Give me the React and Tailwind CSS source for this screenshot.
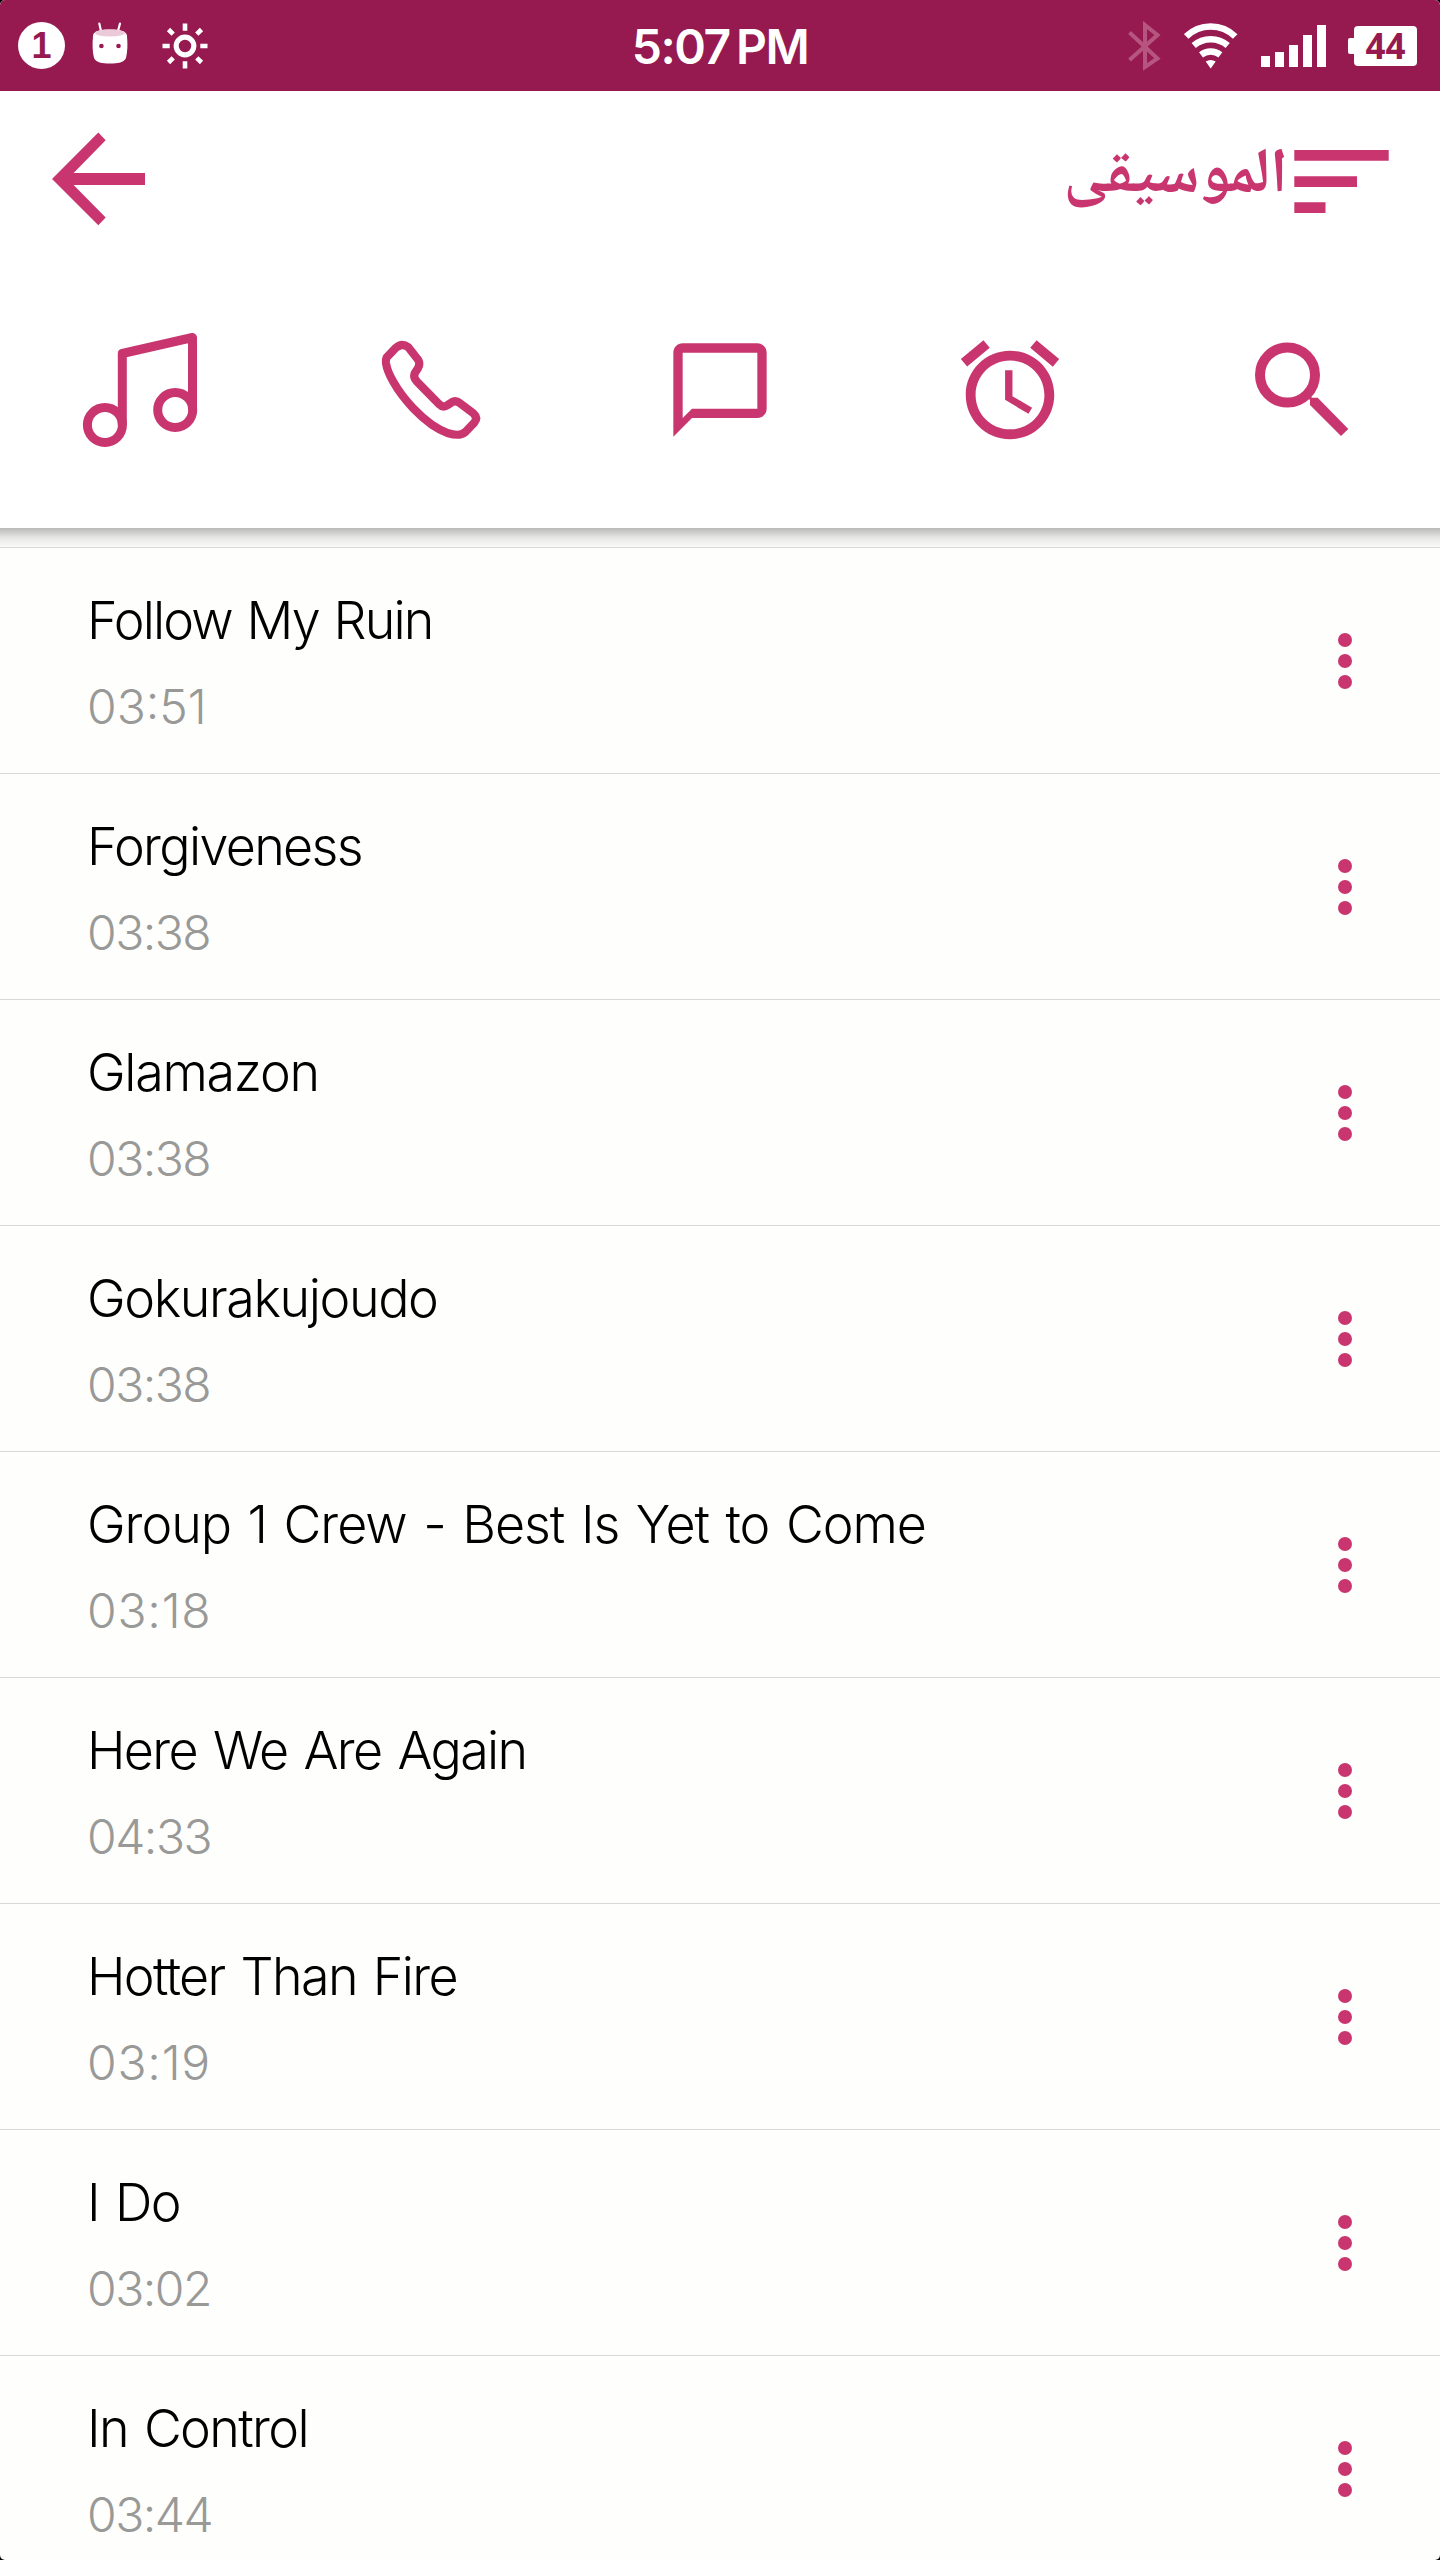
const tracks = [
  { title: 'Follow My Ruin', time: '03:51', spacing: 'tracking-[-1.850px] [word-spacing:2px]', timeSpacing: 'tracking-[0px]' },
  { title: 'Forgiveness', time: '03:38' },
  { title: 'Glamazon', time: '03:38', spacing: 'tracking-[-1.300px]' },
  { title: 'Gokurakujoudo', time: '03:38', spacing: 'tracking-[-1.400px]' },
  { title: 'Group 1 Crew - Best Is Yet to Come', time: '03:18', spacing: 'tracking-[-1.050px] [word-spacing:3px]', timeSpacing: 'tracking-[0.800px]' },
  { title: 'Here We Are Again', time: '04:33' },
  { title: 'Hotter Than Fire', time: '03:19', timeSpacing: 'tracking-[0.800px]' },
  { title: 'I Do', time: '03:02' },
  { title: 'In Control', time: '03:44' },
]

const signalBars = ['h-[11px]', 'h-[15px]', 'h-[22px]', 'h-[32px]', 'h-[42px]']

function AndroidIcon() {
  return (
    <svg className="w-[36px] h-[44px]" viewBox="0 0 36 44" fill="none">
      <path d="M9 9 7.3 1.5M26 9 28 1.5" stroke="#fff" strokeWidth="2.2" strokeLinecap="round" />
      <path d="M1 14C1 9 8 7.500 18 7.500S35 9 35 14C35.800 22 35.500 30 34 36 32 40.500 26 41.500 18 41.500S4 40.500 2 36C.5 30 .2 22 1 14Z" fill="#fff" />
      <ellipse cx="18" cy="11" rx="15" ry="3.400" fill="#ecc9d9" />
      <circle cx="9.400" cy="24" r="2.300" fill="#961950" />
      <circle cx="26.500" cy="24" r="2.300" fill="#961950" />
    </svg>
  )
}

function SunIcon() {
  return (
    <svg className="w-[46px] h-[46px]" viewBox="-23 -23 46 46" fill="none" stroke="#fff">
      <circle r="8.800" strokeWidth="5.200" />
      <path
        d="M0-22.500V-15.300M0 15.300V22.500M-22.500 0H-15.300M15.300 0H22.500M-16.500-16.500-11.800-11.800M16.500-16.500 11.800-11.800M-16.500 16.500-11.800 11.800M16.500 16.500 11.800 11.800"
        strokeWidth="4.600"
      />
    </svg>
  )
}

function StatusBar() {
  return (
    <header className="h-[91px] shrink-0 rounded-t-[5px] bg-[#961950] text-white grid grid-cols-3 items-center">
      <div className="flex items-center pl-[18px]">
        <span className="size-[47px] rounded-full bg-white text-[#961950] flex items-center justify-center font-['Liberation_Sans',sans-serif] font-bold text-[36px] leading-none">
          1
        </span>
        <div className="ml-[27px] mb-[4px]"><AndroidIcon /></div>
        <div className="ml-[34px]"><SunIcon /></div>
      </div>
      <p className="text-center text-[48px] leading-none font-semibold tracking-[-1.500px] font-['Inter',sans-serif] whitespace-nowrap pt-[2px]">
        5:07&#8201;PM
      </p>
      <div className="flex items-center justify-end pr-[23px]">
        <svg className="w-[34px] h-[50px]" viewBox="0 0 34 50" fill="none" stroke="#b6557f" strokeWidth="4">
          <path d="M1.500 11.500 29.500 37.500 17 46V4L29.500 14 1.500 39" />
        </svg>
        <svg className="w-[54px] h-[50px] ml-[22px]" viewBox="0 0 54 50" fill="none" stroke="#fff" strokeWidth="6.500">
          <path d="M2.200 15.500A35 35 0 0 1 51.200 15.500M9.700 24.500A26 26 0 0 1 43.700 24.500M17 33.800A16 16 0 0 1 36.400 33.800" />
          <path d="M21.700 40.500Q26.700 37.500 31.700 40.500L26.700 47.500Z" fill="#fff" stroke="none" />
        </svg>
        <div className="flex items-end gap-[4.500px] ml-[23px]">
          {signalBars.map((h) => (
            <span key={h} className={`w-[9.400px] bg-white ${h}`} />
          ))}
        </div>
        <span className="w-[6px] h-[16px] ml-[22px] rounded-l-[2px] bg-white" />
        <span className="w-[63px] h-[40px] rounded-[4px] bg-white text-[#961950] flex items-center justify-center font-['Open_Sans',sans-serif] font-bold text-[35px] leading-none">
          44
        </span>
      </div>
    </header>
  )
}

function BackArrow() {
  return (
    <svg className="w-[94px] h-[94px]" viewBox="0 0 94 94" fill="#c9366f">
      <path d="M93 41H21.600L53.700 8.300 46.300.6 0 47 46.300 93.300 53.700 85.600 21.600 53H93Z" />
    </svg>
  )
}

function MusicIcon() {
  return (
    <svg className="size-[120px]" viewBox="0 0 120 120" fill="none" stroke="#c9366f" strokeWidth="9" strokeLinejoin="round">
      <circle cx="24.900" cy="95" r="17.500" />
      <circle cx="95.200" cy="80" r="17.500" />
      <path d="M42.300 95V23.500L112.500 7.500V80" />
    </svg>
  )
}

function PhoneIcon() {
  return (
    <svg className="size-[120px]" viewBox="0 0 120 120" fill="none" stroke="#c9366f" strokeWidth="8.200" strokeLinejoin="round">
      <path d="M26 17.700Q32 12.300 38.300 17.300L48.300 30Q50.600 34 47.800 38.600L44.700 43.300Q43 47.700 46.700 51.300L69.300 74.300Q73.300 78.300 77.700 75L81.700 72.300Q85.700 69.800 90 73.300L103.300 83.300Q108.300 88 104.300 92.700L95 102.300C91 105.500 85 105.300 78.300 103.300C65 98.500 53 88.500 43.300 78.300C35 69.500 28.500 61 23.300 51.700C20 46 17 39.500 16 33.300Q15.500 29.500 16.700 27.300Z" />
    </svg>
  )
}

function MessageIcon() {
  return (
    <svg className="size-[112px]" viewBox="0 0 24 24" fill="#c9366f">
      <path d="M20 2H4c-1.100 0-2 .9-2 2v18l4-4h14c1.100 0 2-.9 2-2V4c0-1.100-.9-2-2-2zm0 14H6l-2 2V4h16v12z" />
    </svg>
  )
}

function AlarmIcon() {
  return (
    <svg className="size-[118px]" viewBox="0 0 24 24" fill="#c9366f">
      <path d="M22 5.720l-4.600-3.860-1.290 1.530 4.600 3.860L22 5.720zM7.880 3.390L6.600 1.860 2 5.710l1.290 1.530 4.590-3.850zM12.500 8H11v6l4.750 2.850.75-1.230-4-2.370V8zM12 4c-4.970 0-9 4.030-9 9s4.020 9 9 9c4.970 0 9-4.030 9-9s-4.030-9-9-9zm0 16c-3.870 0-7-3.130-7-7s3.130-7 7-7 7 3.130 7 7-3.130 7-7 7z" />
    </svg>
  )
}

function SearchIcon() {
  return (
    <svg className="size-[120px]" viewBox="0 0 120 120" fill="#c9366f">
      <circle cx="47.500" cy="45" r="27.500" fill="none" stroke="#c9366f" strokeWidth="10" />
      <path d="M72 67.700H77.700L108.300 99 101 106 70 75V70L67 67 69 65Z" />
    </svg>
  )
}

const tabs = [MusicIcon, PhoneIcon, MessageIcon, AlarmIcon, SearchIcon]

function Toolbar() {
  return (
    <div className="h-[437px] shrink-0 bg-white">
      <div className="flex items-start justify-between pt-[41px] pl-[52px] pr-[51px] h-[239px]">
        <button><BackArrow /></button>
        <div className="flex items-start" dir="rtl">
          <svg className="w-[95px] h-[64px] mt-[18px]" viewBox="0 0 95 64" fill="#c9366f">
            <path d="M.3 0H94.700V10.700H.3ZM.3 26.300H63V37H.3ZM.3 52.300H31.500V63H.3Z" />
          </svg>
          <h1 className="mt-[7px] mr-[6px] text-[63px] leading-[80px] font-bold text-[#c9366f] font-['Noto_Naskh_Arabic','DejaVu_Sans_Condensed','DejaVu_Sans',sans-serif]">
            الموسيقى
          </h1>
        </div>
      </div>
      <nav className="flex justify-between px-[80px]">
        {tabs.map((Icon, i) => (
          <button key={i} className="size-[120px] flex items-center justify-center">
            <Icon />
          </button>
        ))}
      </nav>
    </div>
  )
}

function TrackRow({
  title,
  time,
  spacing = 'tracking-[-1.650px] [word-spacing:3px]',
  timeSpacing = 'tracking-[-1.500px]',
}) {
  return (
    <li className="h-[226px] shrink-0 border-t border-[#d9d9d8] flex items-center justify-between pl-[87px] pr-[88px]">
      <div className="pt-[6px] font-['Inter',sans-serif] font-light whitespace-nowrap">
        <p className={`text-[52px] leading-[86px] text-black ${spacing}`}>{title}</p>
        <p className={`text-[48px] leading-[86px] text-[#999998] ${timeSpacing}`}>{time}</p>
      </div>
      <button className="flex flex-col gap-[7px]">
        <span className="size-[14px] rounded-full bg-[#c9366f]" />
        <span className="size-[14px] rounded-full bg-[#c9366f]" />
        <span className="size-[14px] rounded-full bg-[#c9366f]" />
      </button>
    </li>
  )
}

export default function App() {
  return (
    <div className="w-[1440px] h-[2560px] overflow-hidden bg-black">
      <div className="h-full overflow-hidden flex flex-col bg-[#fefefc] rounded-[5px]">
        <StatusBar />
        <Toolbar />
        <div className="h-[19px] shrink-0 bg-linear-to-b from-[#b9b9b8] via-[#e6e6e5] to-[#fafaf9]" />
        <ul className="flex flex-col">
          {tracks.map((track) => (
            <TrackRow key={track.title} {...track} />
          ))}
        </ul>
      </div>
    </div>
  )
}
